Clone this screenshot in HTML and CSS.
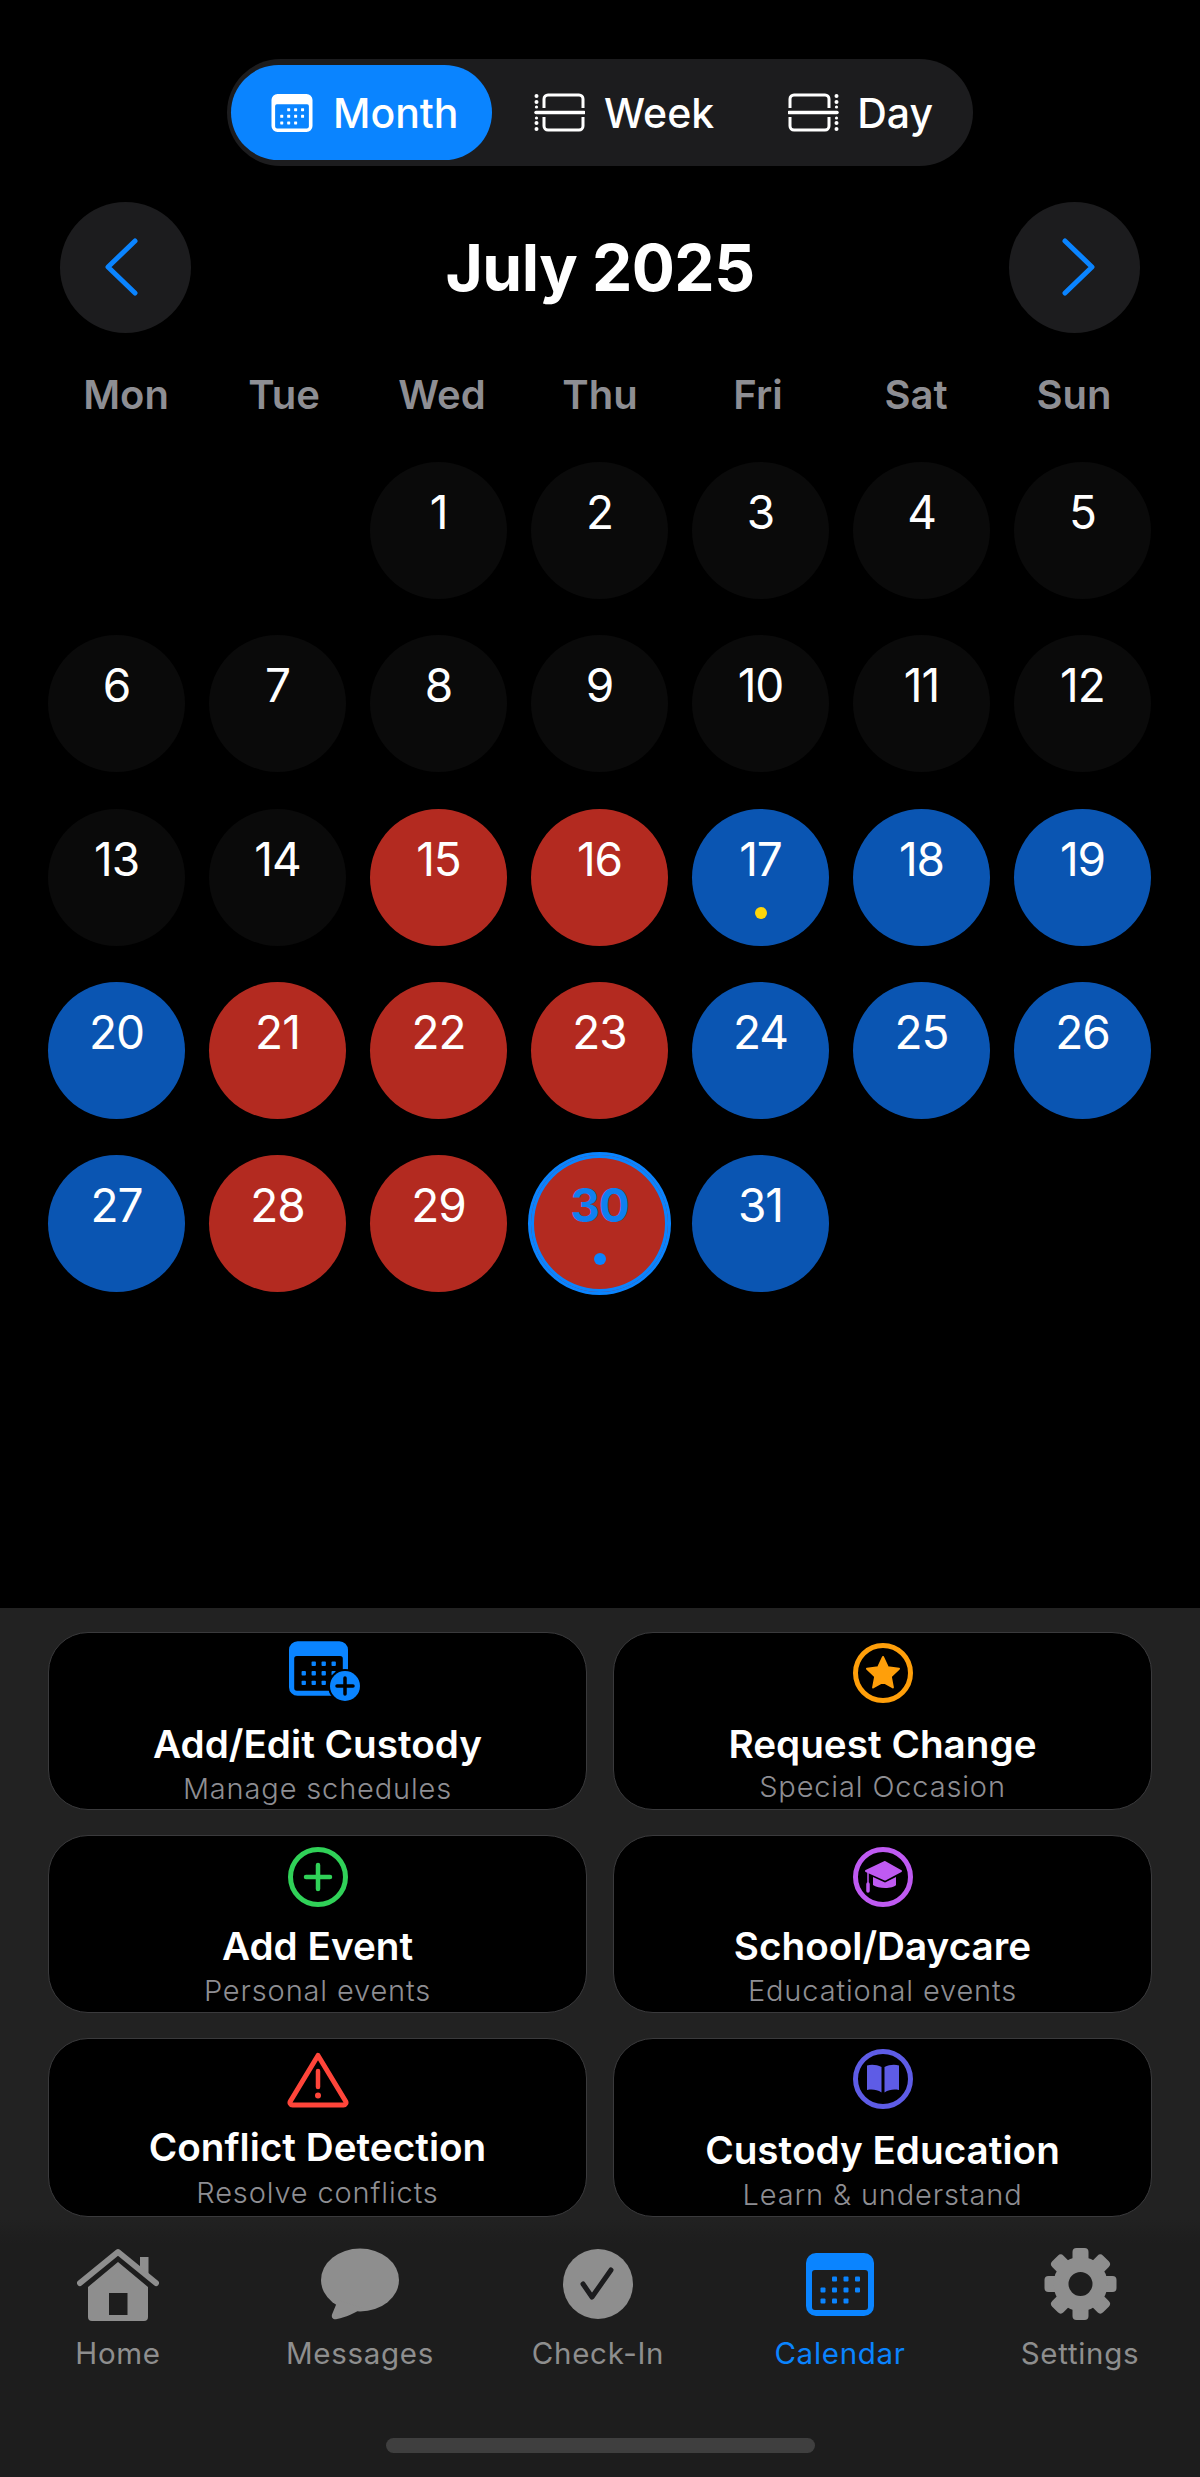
FILE: index.html
```html
<!DOCTYPE html>
<html lang="en">
<head>
<meta charset="utf-8">
<title>Calendar</title>
<link rel="stylesheet" href="styles.css">
</head>
<body>
<svg class="defs" width="0" height="0" aria-hidden="true">
  <symbol id="cal" viewBox="0 0 68 63">
    <path fill="currentColor" fill-rule="evenodd" d="M10 0H58A10 10 0 0 1 68 10V53A10 10 0 0 1 58 63H10A10 10 0 0 1 0 53V10A10 10 0 0 1 10 0ZM9 17A3 3 0 0 0 6 20V54A3 3 0 0 0 9 57H59A3 3 0 0 0 62 54V20A3 3 0 0 0 59 17Z"/>
    <g fill="currentColor">
      <rect x="26" y="23.5" width="5" height="5" rx="1"/><rect x="37.5" y="23.5" width="5" height="5" rx="1"/><rect x="49" y="23.5" width="5" height="5" rx="1"/>
      <rect x="14.500" y="34.500" width="5" height="5" rx="1"/><rect x="26" y="34.500" width="5" height="5" rx="1"/><rect x="37.5" y="34.500" width="5" height="5" rx="1"/><rect x="49" y="34.500" width="5" height="5" rx="1"/>
      <rect x="14.500" y="45.500" width="5" height="5" rx="1"/><rect x="26" y="45.500" width="5" height="5" rx="1"/><rect x="37.5" y="45.500" width="5" height="5" rx="1"/>
    </g>
  </symbol>
  <symbol id="split" viewBox="0 0 51 39">
    <g fill="none" stroke="currentColor" stroke-width="3">
      <path d="M10 15V6A4 4 0 0 1 14 2H45A4 4 0 0 1 49 6V15"/>
      <path d="M10 24V33A4 4 0 0 0 14 37H45A4 4 0 0 0 49 33V24"/>
    </g>
    <path d="M2 19.500H50" stroke="currentColor" stroke-width="3.500" stroke-linecap="round"/>
    <g fill="currentColor">
      <circle cx="2.500" cy="3" r="2"/><circle cx="2.500" cy="9" r="2"/><circle cx="2.500" cy="14" r="1.600"/>
      <circle cx="2.500" cy="25" r="1.600"/><circle cx="2.500" cy="30" r="2"/><circle cx="2.500" cy="36" r="2"/>
    </g>
  </symbol>
</svg>

<main class="main">
  <div class="seg">
    <div class="seg-item seg-item-on">
      <svg class="seg-cal"><use href="#cal"/></svg><span>Month</span>
    </div>
    <div class="seg-item seg-item-week">
      <svg class="seg-split"><use href="#split"/></svg><span>Week</span>
    </div>
    <div class="seg-item seg-item-day">
      <svg class="seg-split seg-flip"><use href="#split"/></svg><span>Day</span>
    </div>
  </div>

  <div class="head">
    <div class="nav-btn">
      <svg viewBox="0 0 131 131"><path d="M75 39 48 65 75 91"/></svg>
    </div>
    <h1 class="title">July 2025</h1>
    <div class="nav-btn">
      <svg viewBox="0 0 131 131"><path d="M56 39 83 65 56 91"/></svg>
    </div>
  </div>

  <div class="weekdays">
    <span>Mon</span><span>Tue</span><span>Wed</span><span>Thu</span><span>Fri</span><span>Sat</span><span>Sun</span>
  </div>

  <div class="days">
    <div class="blank"></div><div class="blank"></div>
    <div class="day"><span>1</span></div><div class="day"><span>2</span></div><div class="day"><span>3</span></div><div class="day"><span>4</span></div><div class="day"><span>5</span></div>
    <div class="day"><span>6</span></div><div class="day"><span>7</span></div><div class="day"><span>8</span></div><div class="day"><span>9</span></div><div class="day"><span>10</span></div><div class="day"><span>11</span></div><div class="day"><span>12</span></div>
    <div class="day"><span>13</span></div><div class="day"><span>14</span></div><div class="day red"><span>15</span></div><div class="day red"><span>16</span></div><div class="day blue"><span>17</span><i class="dot dot-yellow"></i></div><div class="day blue"><span>18</span></div><div class="day blue"><span>19</span></div>
    <div class="day blue"><span>20</span></div><div class="day red"><span>21</span></div><div class="day red"><span>22</span></div><div class="day red"><span>23</span></div><div class="day blue"><span>24</span></div><div class="day blue"><span>25</span></div><div class="day blue"><span>26</span></div>
    <div class="day blue"><span>27</span></div><div class="day red"><span>28</span></div><div class="day red"><span>29</span></div><div class="day red today"><span>30</span><i class="dot dot-blue"></i></div><div class="day blue"><span>31</span></div>
  </div>
</main>

<section class="panel">
  <div class="actions">
    <div class="card card-custody">
      <svg class="ic ic-custody" viewBox="0 0 71 60">
        <svg x="0" y="0" width="59" height="55" class="c-blue"><use href="#cal"/></svg>
        <circle cx="56" cy="45" r="17" fill="#000"/>
        <circle cx="56" cy="45" r="15" fill="#0a84ff"/>
        <path d="M56 37V53M48 45H64" stroke="#000" stroke-width="3.500" stroke-linecap="round"/>
      </svg>
      <div class="card-t">Add/Edit Custody</div>
      <div class="card-s">Manage schedules</div>
    </div>
    <div class="card card-request">
      <svg class="ic" viewBox="0 0 60 60">
        <circle cx="30" cy="30" r="27.500" fill="none" stroke="#ff9f0a" stroke-width="5"/>
        <path d="M30 14 34.800 24.200 46 25.700 37.800 33.400 39.900 44.500 30 39 20.100 44.500 22.200 33.400 14 25.700 25.200 24.200Z" fill="#ff9f0a" stroke="#ff9f0a" stroke-width="2" stroke-linejoin="round"/>
      </svg>
      <div class="card-t">Request Change</div>
      <div class="card-s">Special Occasion</div>
    </div>
    <div class="card card-event">
      <svg class="ic" viewBox="0 0 60 60">
        <circle cx="30" cy="30" r="27.500" fill="none" stroke="#30d158" stroke-width="5"/>
        <path d="M30 18V42M18 30H42" stroke="#30d158" stroke-width="4.500" stroke-linecap="round"/>
      </svg>
      <div class="card-t">Add Event</div>
      <div class="card-s">Personal events</div>
    </div>
    <div class="card card-event">
      <svg class="ic" viewBox="0 0 60 60">
        <circle cx="30" cy="30" r="27.500" fill="none" stroke="#bf5af2" stroke-width="5"/>
        <path d="M32 15 48 24 32 32.500 13 24Z" fill="#bf5af2" stroke="#bf5af2" stroke-width="2" stroke-linejoin="round"/>
        <path d="M20 30 32 35.500 43 30V38C40 42 25 42 20 38Z" fill="#bf5af2"/>
        <path d="M15 25.500V38" stroke="#bf5af2" stroke-width="1.500"/>
        <path d="M15 37V44" stroke="#bf5af2" stroke-width="3.500" stroke-linecap="round"/>
      </svg>
      <div class="card-t">School/Daycare</div>
      <div class="card-s">Educational events</div>
    </div>
    <div class="card card-conflict">
      <svg class="ic ic-warn" viewBox="0 0 62 56">
        <path d="M31 3.500 58.500 49A2.500 2.500 0 0 1 56.500 53H5.500A2.500 2.500 0 0 1 3.500 49Z" fill="none" stroke="#ff453a" stroke-width="5" stroke-linejoin="round"/>
        <path d="M31 19V35" stroke="#ff453a" stroke-width="4.500" stroke-linecap="round"/>
        <circle cx="31" cy="43.500" r="3" fill="#ff453a"/>
      </svg>
      <div class="card-t">Conflict Detection</div>
      <div class="card-s">Resolve conflicts</div>
    </div>
    <div class="card card-edu">
      <svg class="ic" viewBox="0 0 60 60">
        <circle cx="30" cy="30" r="27.500" fill="none" stroke="#5e5ce6" stroke-width="5"/>
        <path d="M28.500 18C24 15.500 18 15 14 16.500V41C19 40 24 40.500 28.500 43.500Z" fill="#5e5ce6"/>
        <path d="M31.500 18C36 15.500 42 15 46 16.500V41C41 40 36 40.500 31.500 43.500Z" fill="#5e5ce6"/>
      </svg>
      <div class="card-t">Custody Education</div>
      <div class="card-s">Learn &amp; understand</div>
    </div>
  </div>

  <nav class="tabs">
    <div class="tab tab-nudge">
      <svg class="tab-ic ti-home" viewBox="0 0 82 73">
        <path d="M63 9H71.500V26L63 20Z" fill="#8e8e8e"/>
        <path d="M3 35 41 4 79 35" fill="none" stroke="#8e8e8e" stroke-width="6" stroke-linecap="round" stroke-linejoin="round"/>
        <path fill-rule="evenodd" d="M41 14 71 39V69A4 4 0 0 1 67 73H15A4 4 0 0 1 11 69V39ZM32 45V67H50.500V45Z" fill="#8e8e8e"/>
      </svg>
      <span>Home</span>
    </div>
    <div class="tab">
      <svg class="tab-ic ti-msg" viewBox="0 0 78 73">
        <ellipse cx="39" cy="32" rx="39" ry="31.500" fill="#8e8e8e"/>
        <path d="M17 52 11 66.500C10 70.500 13 72 16 71 25 69 33 66 41 60Z" fill="#8e8e8e"/>
      </svg>
      <span>Messages</span>
    </div>
    <div class="tab tab-nudge">
      <svg class="tab-ic ti-check" viewBox="0 0 72 73">
        <circle cx="36" cy="36" r="35" fill="#8e8e8e"/>
        <path d="M21 36 30 49 49 22" fill="none" stroke="#1c1c1e" stroke-width="5" stroke-linecap="round" stroke-linejoin="round"/>
      </svg>
      <span>Check-In</span>
    </div>
    <div class="tab tab-on">
      <svg class="tab-cal"><use href="#cal"/></svg>
      <span>Calendar</span>
    </div>
    <div class="tab">
      <svg class="tab-ic ti-gear" viewBox="0 0 73 73">
        <g fill="#8e8e8e" transform="translate(36.500 36)">
          <rect x="-8" y="-36" width="16" height="20" rx="4"/>
          <rect x="-8" y="-36" width="16" height="20" rx="4" transform="rotate(45)"/>
          <rect x="-8" y="-36" width="16" height="20" rx="4" transform="rotate(90)"/>
          <rect x="-8" y="-36" width="16" height="20" rx="4" transform="rotate(135)"/>
          <rect x="-8" y="-36" width="16" height="20" rx="4" transform="rotate(180)"/>
          <rect x="-8" y="-36" width="16" height="20" rx="4" transform="rotate(225)"/>
          <rect x="-8" y="-36" width="16" height="20" rx="4" transform="rotate(270)"/>
          <rect x="-8" y="-36" width="16" height="20" rx="4" transform="rotate(315)"/>
        </g>
        <circle cx="36.500" cy="36" r="19.500" fill="none" stroke="#8e8e8e" stroke-width="15"/>
      </svg>
      <span>Settings</span>
    </div>
  </nav>
  <div class="home-bar"><div class="home-pill"></div></div>
</section>
</body>
</html>
```

FILE: styles.css
```css
* { box-sizing: border-box; }
html, body { margin: 0; padding: 0; background: #000; }
body {
  width: 1200px;
  height: 2477px;
  overflow: hidden;
  display: flex;
  flex-direction: column;
  font-family: Inter, "Noto Sans", "Liberation Sans", sans-serif;
  color: #fff;
}
.defs { position: absolute; }

.main { height: 1608px; padding-top: 59px; }

.seg {
  width: 746px;
  height: 107px;
  margin: 0 auto;
  background: #1c1c1e;
  border-radius: 54px;
  padding: 6px 0 0 4px;
  display: flex;
  align-items: flex-start;
}
.seg-item {
  height: 95px;
  display: flex;
  align-items: center;
  font-size: 41px;
  font-weight: 500;
}
.seg-item-on {
  width: 261px;
  background: #0a84ff;
  border-radius: 48px;
  padding-left: 40px;
  gap: 20px;
}
.seg-item-week { margin-left: 42px; gap: 19px; }
.seg-item-day { margin-left: 74px; gap: 18px; }
.seg-cal { width: 42px; height: 38px; color: #fff; }
.seg-split { width: 51px; height: 39px; color: #fff; }
.seg-flip { transform: scaleX(-1); }

.head {
  margin-top: 36px;
  height: 131px;
  padding: 0 60px;
  display: flex;
  justify-content: space-between;
  align-items: center;
}
.nav-btn {
  width: 131px;
  height: 131px;
  border-radius: 50%;
  background: #1c1c1e;
}
.nav-btn svg { display: block; width: 131px; height: 131px; }
.nav-btn path {
  fill: none;
  stroke: #0a84ff;
  stroke-width: 5;
  stroke-linecap: round;
  stroke-linejoin: round;
}
.title { margin: 0; font-size: 64px; line-height: 76px; font-weight: 700; letter-spacing: -0.5px; }

.weekdays {
  margin-top: 38px;
  padding: 0 47px;
  display: grid;
  grid-template-columns: repeat(7, 158px);
  text-align: center;
  font-size: 40px;
  line-height: 48px;
  font-weight: 600;
  color: #8e8e93;
}

.days {
  margin-top: 43px;
  padding: 0 48px;
  display: grid;
  grid-template-columns: repeat(7, 137px);
  grid-auto-rows: 137px;
  column-gap: 24px;
  row-gap: 36.25px;
}
.day {
  border-radius: 50%;
  background: #0a0a0a;
  padding-top: 24px;
  display: flex;
  flex-direction: column;
  align-items: center;
  font-size: 46px;
  line-height: 52px;
  font-weight: 400;
  letter-spacing: -1px;
}
.red { background: #b32a20; }
.blue { background: #0a55b2; }
.today {
  box-shadow: 0 0 0 3px #0a84ff, inset 0 0 0 3px #0a84ff;
  color: #0f7ff0;
  font-weight: 700;
}
.dot { display: block; width: 12px; height: 12px; border-radius: 50%; margin-top: 22px; }
.dot-yellow { background: #ffd60a; }
.dot-blue { background: #0a84ff; }

.panel { flex: 1; display: flex; flex-direction: column; background: #222222; }
.actions {
  height: 612px;
  padding: 24px 48px 0;
  display: grid;
  grid-template-columns: 539px 539px;
  grid-template-rows: 178px 178px 179px;
  column-gap: 26px;
  row-gap: 25px;
}
.card {
  border: 1.5px solid #3a3a3c;
  border-radius: 40px;
  background: #000;
  display: flex;
  flex-direction: column;
  align-items: center;
  overflow: visible;
}
.ic { display: block; width: 60px; height: 60px; flex: none; }
.ic-custody { width: 71px; margin-left: 13px; }
.ic-warn { width: 62px; height: 56px; }
.c-blue { color: #0a84ff; }
.card-t { font-size: 38.7px; line-height: 48px; font-weight: 600; white-space: nowrap; }
.card-s {
  font-size: 29px;
  line-height: 36px;
  font-weight: 300;
  letter-spacing: 0.85px;
  color: #8e8e93;
  white-space: nowrap;
}
.card-custody { padding-top: 8px; }
.card-custody .card-t { margin-top: 19px; }
.card-custody .card-s { margin-top: 3px; }
.card-request { padding-top: 10px; }
.card-request .card-t { margin-top: 17px; }
.card-request .card-s { margin-top: 1px; }
.card-event { padding-top: 11px; }
.card-event .card-t { margin-top: 15px; }
.card-event .card-s { margin-top: 3px; }
.card-conflict { padding-top: 13px; }
.card-conflict .card-t { margin-top: 15px; }
.card-conflict .card-s { margin-top: 4px; }
.card-edu { padding-top: 10px; }
.card-edu .card-t { margin-top: 17px; }
.card-edu .card-s { margin-top: 3px; }

.tabs {
  height: 185px;
  background: linear-gradient(#212121, #1d1d1d 24px);
  padding-top: 28px;
  display: grid;
  grid-template-columns: repeat(5, 240px);
}
.tab {
  display: flex;
  flex-direction: column;
  align-items: center;
  font-size: 29.5px;
  line-height: 36px;
  letter-spacing: 0.7px;
  font-weight: 400;
  color: #8e8e8e;
}
.tab-nudge { margin-right: 4px; }
.tab-ic { display: block; height: 73px; margin-bottom: 14px; }
.ti-home { width: 82px; }
.ti-msg { width: 78px; }
.ti-check { width: 72px; }
.ti-gear { width: 73px; }
.tab-on { color: #0a84ff; }
.tab-cal { display: block; width: 68px; height: 63px; color: #0a84ff; margin: 5px 0 19px; }

.home-bar {
  flex: 1;
  background: #1d1d1d;
  display: flex;
  justify-content: center;
  padding-top: 33px;
}
.home-pill { width: 429px; height: 15px; border-radius: 8px; background: #3f3f3f; }
```
